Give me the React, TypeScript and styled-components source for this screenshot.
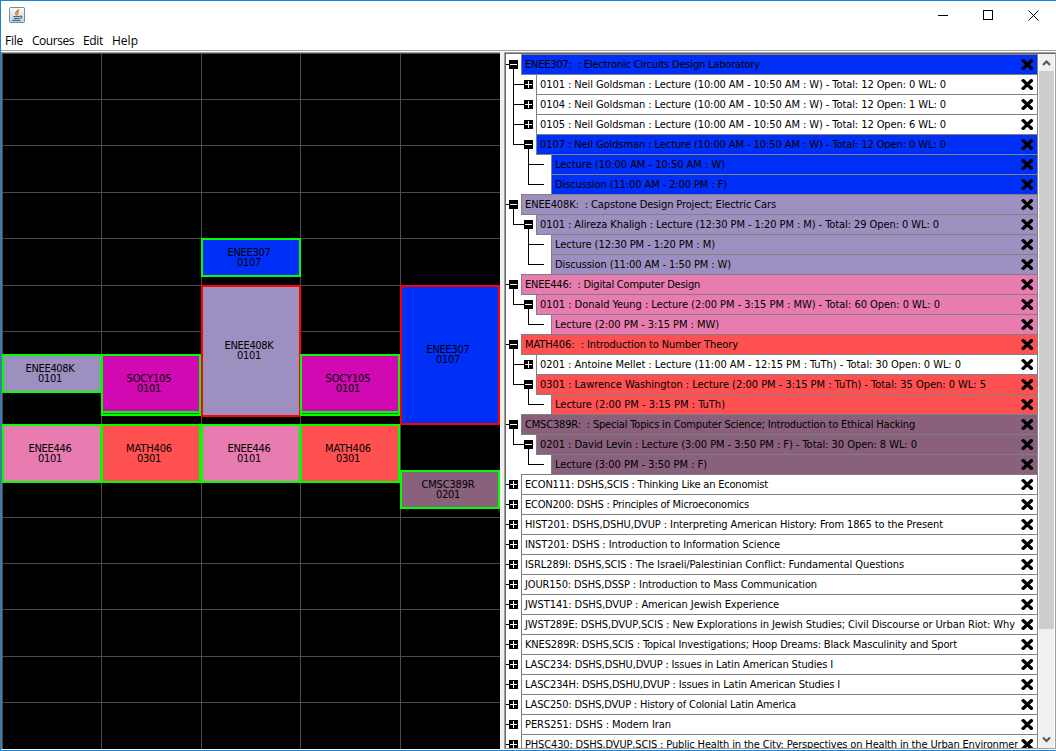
import React, { useLayoutEffect, useRef, useState } from "react";
import styled, { createGlobalStyle } from "styled-components";

const BLUE = "#002ff7";
const PURPLE = "#9e8fc1";
const PINK = "#e87cb0";
const RED = "#ff5151";
const MAUVE = "#8a617c";
const MAGENTA = "#d109b3";

const GlobalStyle = createGlobalStyle`
  * { box-sizing: border-box; }
  body { margin: 0; background: #fff; overflow: hidden; }
`;

const Window = styled.div`
  width: 1056px;
  height: 751px;
  display: flex;
  flex-direction: column;
  background: #fff;
  border: solid #1883d7;
  border-width: 1px 0 1px 1px;
  color: #000;
  font-family: "DejaVu Sans Condensed", "DejaVu Sans", sans-serif;
  font-size: 11px;
  overflow: hidden;
`;

const TitleBar = styled.header`
  flex: none;
  height: 29px;
  display: flex;
  align-items: center;
  justify-content: space-between;
  padding-left: 8px;
`;

const AppIcon = styled.svg`
  display: block;
  margin-bottom: 1px;
`;

const WindowControls = styled.div`
  display: flex;
  height: 29px;
`;

const ControlButton = styled.button<{ $w: number }>`
  width: ${(p) => p.$w}px;
  height: 29px;
  padding: 0;
  border: 0;
  background: none;
  display: flex;
  justify-content: center;
  align-items: center;
`;

const MenuBar = styled.nav`
  flex: none;
  height: 21px;
  display: flex;
  align-items: flex-start;
  gap: 9px;
  padding: 1px 0 0 4px;
  border-bottom: 1px solid #a0a0a0;
  font-family: "Open Sans", "Noto Sans", sans-serif;
  font-size: 12px;
  line-height: 19px;
`;

const MenuItem = styled.span<{ $w: number }>`
  width: ${(p) => p.$w}px;
  white-space: nowrap;
`;

const Body = styled.main`
  flex: 1;
  min-height: 0;
  display: flex;
  padding: 1px 0 1px 0;
`;

const Schedule = styled.section`
  position: relative;
  flex: none;
  width: 499px;
  background: #000;
  border-top: 1px solid #a0a0a0;
  border-left: 1px solid #6f6f6f;
  overflow: hidden;
`;

const GridLines = styled.svg`
  display: block;
`;

const Block = styled.div<{ $x: number; $y: number; $w: number; $h: number; $fill: string; $edge: string }>`
  position: absolute;
  left: ${(p) => p.$x}px;
  top: ${(p) => p.$y}px;
  width: ${(p) => p.$w}px;
  height: ${(p) => p.$h}px;
  background: ${(p) => p.$fill};
  border: 2px solid ${(p) => p.$edge};
  display: flex;
  flex-direction: column;
  align-items: center;
  justify-content: center;
  padding: 0 4px 0 0;
  line-height: 10px;
`;

const Overhang = styled.i`
  position: absolute;
  left: -2px;
  right: -2px;
  bottom: -5px;
  height: 3px;
  background: #00ff00;
`;

const BackToBack = styled.i`
  position: absolute;
  left: 0;
  right: 0;
  bottom: -3px;
  height: 1px;
  background: #0b7a10;
`;

const Divider = styled.div`
  flex: none;
  width: 4px;
  background: #f0f0f0;
`;

const Courses = styled.section`
  flex: 1;
  min-width: 0;
  display: flex;
  border: 1px solid #a0a0a0;
  box-shadow: inset 1px 1px 0 #696969;
  padding: 2px 1px 0 1px;
  overflow: hidden;
`;

const Tree = styled.div`
  flex: 1;
  min-width: 0;
  display: flex;
  flex-direction: column;
`;

const TreeRow = styled.div`
  flex: none;
  display: flex;
  height: 20px;
`;

const Gutter = styled.svg`
  flex: none;
  display: block;
`;

const RowBox = styled.div<{ $fill: string }>`
  flex: 1;
  min-width: 0;
  height: 21px;
  margin-top: -1px;
  border: 1px solid #808080;
  background: ${(p) => p.$fill};
  display: flex;
  align-items: center;
  padding: 0 4px 0 0;
`;

const RowLabel = styled.div`
  flex: 1;
  min-width: 0;
  overflow: hidden;
  white-space: pre;
  line-height: 19px;
  padding-left: 3px;
  margin-right: 3px;
`;

const RemoveIcon = styled.svg`
  flex: none;
  display: block;
`;

const Fitted = styled.span`
  display: inline-block;
  white-space: pre;
`;

const ScrollBar = styled.div`
  flex: none;
  width: 16px;
  margin-top: -1px;
  border-left: 1px solid #fff;
  background: #f0f0f0;
  display: flex;
  flex-direction: column;
`;

const ScrollArrow = styled.svg`
  flex: none;
  display: block;
`;

const Track = styled.div`
  flex: 1;
`;

const Thumb = styled.div`
  height: 558px;
  background: #cdcdcd;
`;

/* Spreads the letters so that the text takes the given width. */
function Fit({ text, width }: { text: string; width: number }) {
  const ref = useRef<HTMLSpanElement>(null);
  const [spacing, setSpacing] = useState(0);
  useLayoutEffect(() => {
    if (!ref.current) return;
    const natural = ref.current.getBoundingClientRect().width;
    setSpacing((width - natural) / text.length);
  }, [text, width]);
  return (
    <Fitted ref={ref} style={{ letterSpacing: spacing }}>
      {text}
    </Fitted>
  );
}

const menus: [string, number][] = [
  ["File", 18],
  ["Courses", 42],
  ["Edit", 20],
  ["Help", 26],
];

type Slot = {
  code: string;
  section: string;
  x: number;
  y: number;
  w: number;
  h: number;
  fill: string;
  clash?: boolean;
  touching?: boolean;
  cw: number;
};

const slots: Slot[] = [
  { code: "ENEE408K", section: "0101", x: 0, y: 301, w: 100, h: 39, fill: PURPLE, cw: 49 },
  { code: "ENEE446", section: "0101", x: 0, y: 371, w: 100, h: 59, fill: PINK, cw: 43 },
  { code: "SOCY105", section: "0101", x: 99, y: 301, w: 100, h: 59, fill: MAGENTA, touching: true, cw: 45 },
  { code: "MATH406", section: "0301", x: 99, y: 371, w: 100, h: 59, fill: RED, cw: 46 },
  { code: "ENEE307", section: "0107", x: 199, y: 185, w: 100, h: 39, fill: BLUE, cw: 43 },
  { code: "ENEE408K", section: "0101", x: 199, y: 232, w: 100, h: 132, fill: PURPLE, clash: true, cw: 49 },
  { code: "ENEE446", section: "0101", x: 199, y: 371, w: 100, h: 59, fill: PINK, cw: 43 },
  { code: "SOCY105", section: "0101", x: 298, y: 301, w: 100, h: 59, fill: MAGENTA, touching: true, cw: 45 },
  { code: "MATH406", section: "0301", x: 298, y: 371, w: 100, h: 59, fill: RED, cw: 46 },
  { code: "ENEE307", section: "0107", x: 398, y: 232, w: 100, h: 140, fill: BLUE, clash: true, cw: 43 },
  { code: "CMSC389R", section: "0201", x: 398, y: 417, w: 100, h: 39, fill: MAUVE, cw: 53 },
];

type Row = { level: 0 | 1 | 2; text: string; w: number; fill?: string; open?: boolean; last?: boolean };

const rows: Row[] = [
  { level: 0, text: "ENEE307:  : Electronic Circuits Design Laboratory", w: 235, fill: BLUE, open: true },
  { level: 1, text: "0101 : Neil Goldsman : Lecture (10:00 AM - 10:50 AM : W) - Total: 12 Open: 0 WL: 0", w: 406 },
  { level: 1, text: "0104 : Neil Goldsman : Lecture (10:00 AM - 10:50 AM : W) - Total: 12 Open: 1 WL: 0", w: 406 },
  { level: 1, text: "0105 : Neil Goldsman : Lecture (10:00 AM - 10:50 AM : W) - Total: 12 Open: 6 WL: 0", w: 406 },
  { level: 1, text: "0107 : Neil Goldsman : Lecture (10:00 AM - 10:50 AM : W) - Total: 12 Open: 0 WL: 0", w: 406, fill: BLUE, open: true, last: true },
  { level: 2, text: "Lecture (10:00 AM - 10:50 AM : W)", w: 170, fill: BLUE },
  { level: 2, text: "Discussion (11:00 AM - 2:00 PM : F)", w: 172, fill: BLUE, last: true },
  { level: 0, text: "ENEE408K:  : Capstone Design Project; Electric Cars", w: 251, fill: PURPLE, open: true },
  { level: 1, text: "0101 : Alireza Khaligh : Lecture (12:30 PM - 1:20 PM : M) - Total: 29 Open: 0 WL: 0", w: 399, fill: PURPLE, open: true, last: true },
  { level: 2, text: "Lecture (12:30 PM - 1:20 PM : M)", w: 160, fill: PURPLE },
  { level: 2, text: "Discussion (11:00 AM - 1:50 PM : W)", w: 176, fill: PURPLE, last: true },
  { level: 0, text: "ENEE446:  : Digital Computer Design", w: 175, fill: PINK, open: true },
  { level: 1, text: "0101 : Donald Yeung : Lecture (2:00 PM - 3:15 PM : MW) - Total: 60 Open: 0 WL: 0", w: 400, fill: PINK, open: true, last: true },
  { level: 2, text: "Lecture (2:00 PM - 3:15 PM : MW)", w: 164, fill: PINK, last: true },
  { level: 0, text: "MATH406:  : Introduction to Number Theory", w: 213, fill: RED, open: true },
  { level: 1, text: "0201 : Antoine Mellet : Lecture (11:00 AM - 12:15 PM : TuTh) - Total: 30 Open: 0 WL: 0", w: 421 },
  { level: 1, text: "0301 : Lawrence Washington : Lecture (2:00 PM - 3:15 PM : TuTh) - Total: 35 Open: 0 WL: 5", w: 446, fill: RED, open: true, last: true },
  { level: 2, text: "Lecture (2:00 PM - 3:15 PM : TuTh)", w: 170, fill: RED, last: true },
  { level: 0, text: "CMSC389R:  : Special Topics in Computer Science; Introduction to Ethical Hacking", w: 390, fill: MAUVE, open: true },
  { level: 1, text: "0201 : David Levin : Lecture (3:00 PM - 3:50 PM : F) - Total: 30 Open: 8 WL: 0", w: 377, fill: MAUVE, open: true, last: true },
  { level: 2, text: "Lecture (3:00 PM - 3:50 PM : F)", w: 152, fill: MAUVE, last: true },
  { level: 0, text: "ECON111: DSHS,SCIS : Thinking Like an Economist", w: 243 },
  { level: 0, text: "ECON200: DSHS : Principles of Microeconomics", w: 224 },
  { level: 0, text: "HIST201: DSHS,DSHU,DVUP : Interpreting American History: From 1865 to the Present", w: 418 },
  { level: 0, text: "INST201: DSHS : Introduction to Information Science", w: 255 },
  { level: 0, text: "ISRL289I: DSHS,SCIS : The Israeli/Palestinian Conflict: Fundamental Questions", w: 379 },
  { level: 0, text: "JOUR150: DSHS,DSSP : Introduction to Mass Communication", w: 292 },
  { level: 0, text: "JWST141: DSHS,DVUP : American Jewish Experience", w: 254 },
  { level: 0, text: "JWST289E: DSHS,DVUP,SCIS : New Explorations in Jewish Studies; Civil Discourse or Urban Riot: Why", w: 490 },
  { level: 0, text: "KNES289R: DSHS,SCIS : Topical Investigations; Hoop Dreams: Black Masculinity and Sport", w: 432 },
  { level: 0, text: "LASC234: DSHS,DSHU,DVUP : Issues in Latin American Studies I", w: 308 },
  { level: 0, text: "LASC234H: DSHS,DSHU,DVUP : Issues in Latin American Studies I", w: 315 },
  { level: 0, text: "LASC250: DSHS,DVUP : History of Colonial Latin America", w: 271 },
  { level: 0, text: "PERS251: DSHS : Modern Iran", w: 146 },
  { level: 0, text: "PHSC430: DSHS,DVUP,SCIS : Public Health in the City: Perspectives on Health in the Urban Environment", w: 499 },
];

function TreeGutter({ row }: { row: Row }) {
  const { level, open, last } = row;
  const trunk = 7 + 15 * (level - 1);
  const boxX = 3 + 15 * level;
  return (
    <Gutter width={15 * (level + 1)} height={20} shapeRendering="crispEdges">
      {level > 0 && <rect x={trunk} y={0} width={1} height={last ? 10 : 20} />}
      <rect x={level ? trunk : 0} y={9} width={level === 2 ? 16 : level ? 11 : 3} height={1} />
      {level < 2 && (
        <>
          <rect x={boxX} y={5} width={9} height={9} />
          <rect x={boxX + 1} y={9} width={7} height={1} fill="#fff" />
          {!open && <rect x={boxX + 4} y={6} width={1} height={7} fill="#fff" />}
          {open && <rect x={boxX + 4} y={14} width={1} height={6} />}
        </>
      )}
    </Gutter>
  );
}

function JavaIcon() {
  return (
    <AppIcon width="16" height="16" viewBox="0 0 16 16">
      <defs>
        <linearGradient id="cup" x1="0" y1="0" x2="0" y2="1">
          <stop offset="0" stopColor="#fafafa" />
          <stop offset="1" stopColor="#c3d0da" />
        </linearGradient>
      </defs>
      <rect x="0.5" y="0.5" width="15" height="15" rx="1" fill="url(#cup)" stroke="#6f8ba0" />
      <path d="M9.6 2.2C9.8 4 6.2 4.6 6.6 6.4C6.8 7.2 7.4 7.7 7.4 8.4M10 4.6C8.6 5 7.9 5.8 8.5 6.6C8.9 7.2 8.7 7.7 8.3 8.3" fill="none" stroke="#e8771a" strokeWidth="1.3" />
      <path d="M4.2 9.5H11M5 11.4H10.4M3.4 13.4H11.4M11 9.2C13.3 8.8 13.2 11 11.2 11.4" fill="none" stroke="#3f6c8f" strokeWidth="1.2" />
    </AppIcon>
  );
}

const columnLines = [0, 99, 199, 298, 398];
const hourLines = [0, 46, 92, 139, 185, 232, 278, 325, 371, 417, 464, 510, 556, 603, 649];

export default function App() {
  return (
    <Window>
      <GlobalStyle />
      <TitleBar>
        <JavaIcon />
        <WindowControls>
          <ControlButton $w={45} aria-label="Minimize">
            <svg width="11" height="11" shapeRendering="crispEdges">
              <rect x="0" y="5" width="10" height="1" />
            </svg>
          </ControlButton>
          <ControlButton $w={45} aria-label="Maximize">
            <svg width="11" height="11" shapeRendering="crispEdges">
              <path d="M0 0H10V10H0ZM1 1V9H9V1Z" fillRule="evenodd" />
            </svg>
          </ControlButton>
          <ControlButton $w={45} aria-label="Close">
            <svg width="11" height="11">
              <path d="M0.5 0.5L10.5 10.5M10.5 0.5L0.5 10.5" stroke="#000" fill="none" />
            </svg>
          </ControlButton>
        </WindowControls>
      </TitleBar>
      <MenuBar>
        {menus.map(([label, w]) => (
          <MenuItem key={label} $w={w}>
            <Fit text={label} width={w} />
          </MenuItem>
        ))}
      </MenuBar>
      <Body>
        <Schedule>
          <GridLines width={498} height={696} shapeRendering="crispEdges" fill="#4b4b4b">
            {columnLines.map((x) => (
              <rect key={x} x={x} y={0} width={1} height={696} />
            ))}
            {hourLines.map((y) => (
              <rect key={y} x={0} y={y} width={498} height={1} />
            ))}
          </GridLines>
          {slots.map((s, i) => (
            <Block key={i} $x={s.x} $y={s.y} $w={s.w} $h={s.h} $fill={s.fill} $edge={s.clash ? "#ff0000" : "#00ff00"}>
              <Fit text={s.code} width={s.cw} />
              <Fit text={s.section} width={24} />
              {s.touching && (
                <>
                  <Overhang />
                  <BackToBack />
                </>
              )}
            </Block>
          ))}
        </Schedule>
        <Divider />
        <Courses>
          <Tree>
            {rows.map((row, i) => (
              <TreeRow key={i}>
                <TreeGutter row={row} />
                <RowBox $fill={row.fill ?? "#fff"}>
                  <RowLabel>
                    <Fit text={row.text} width={row.w} />
                  </RowLabel>
                  <RemoveIcon width={12} height={11} viewBox="0 0 12 11">
                    <path d="M2.3 1.7L10.3 9.3M10.3 1.7L2.3 9.3" stroke="#000" strokeWidth="3.4" strokeLinecap="square" strokeLinejoin="round" />
                  </RemoveIcon>
                </RowBox>
              </TreeRow>
            ))}
          </Tree>
          <ScrollBar>
            <ScrollArrow width={15} height={17}>
              <path d="M4 11L7.5 7.5L11 11" fill="none" stroke="#555" strokeWidth="2" />
            </ScrollArrow>
            <Track>
              <Thumb />
            </Track>
            <ScrollArrow width={15} height={17}>
              <path d="M4 6.5L7.5 10L11 6.5" fill="none" stroke="#555" strokeWidth="2" />
            </ScrollArrow>
          </ScrollBar>
        </Courses>
      </Body>
    </Window>
  );
}
